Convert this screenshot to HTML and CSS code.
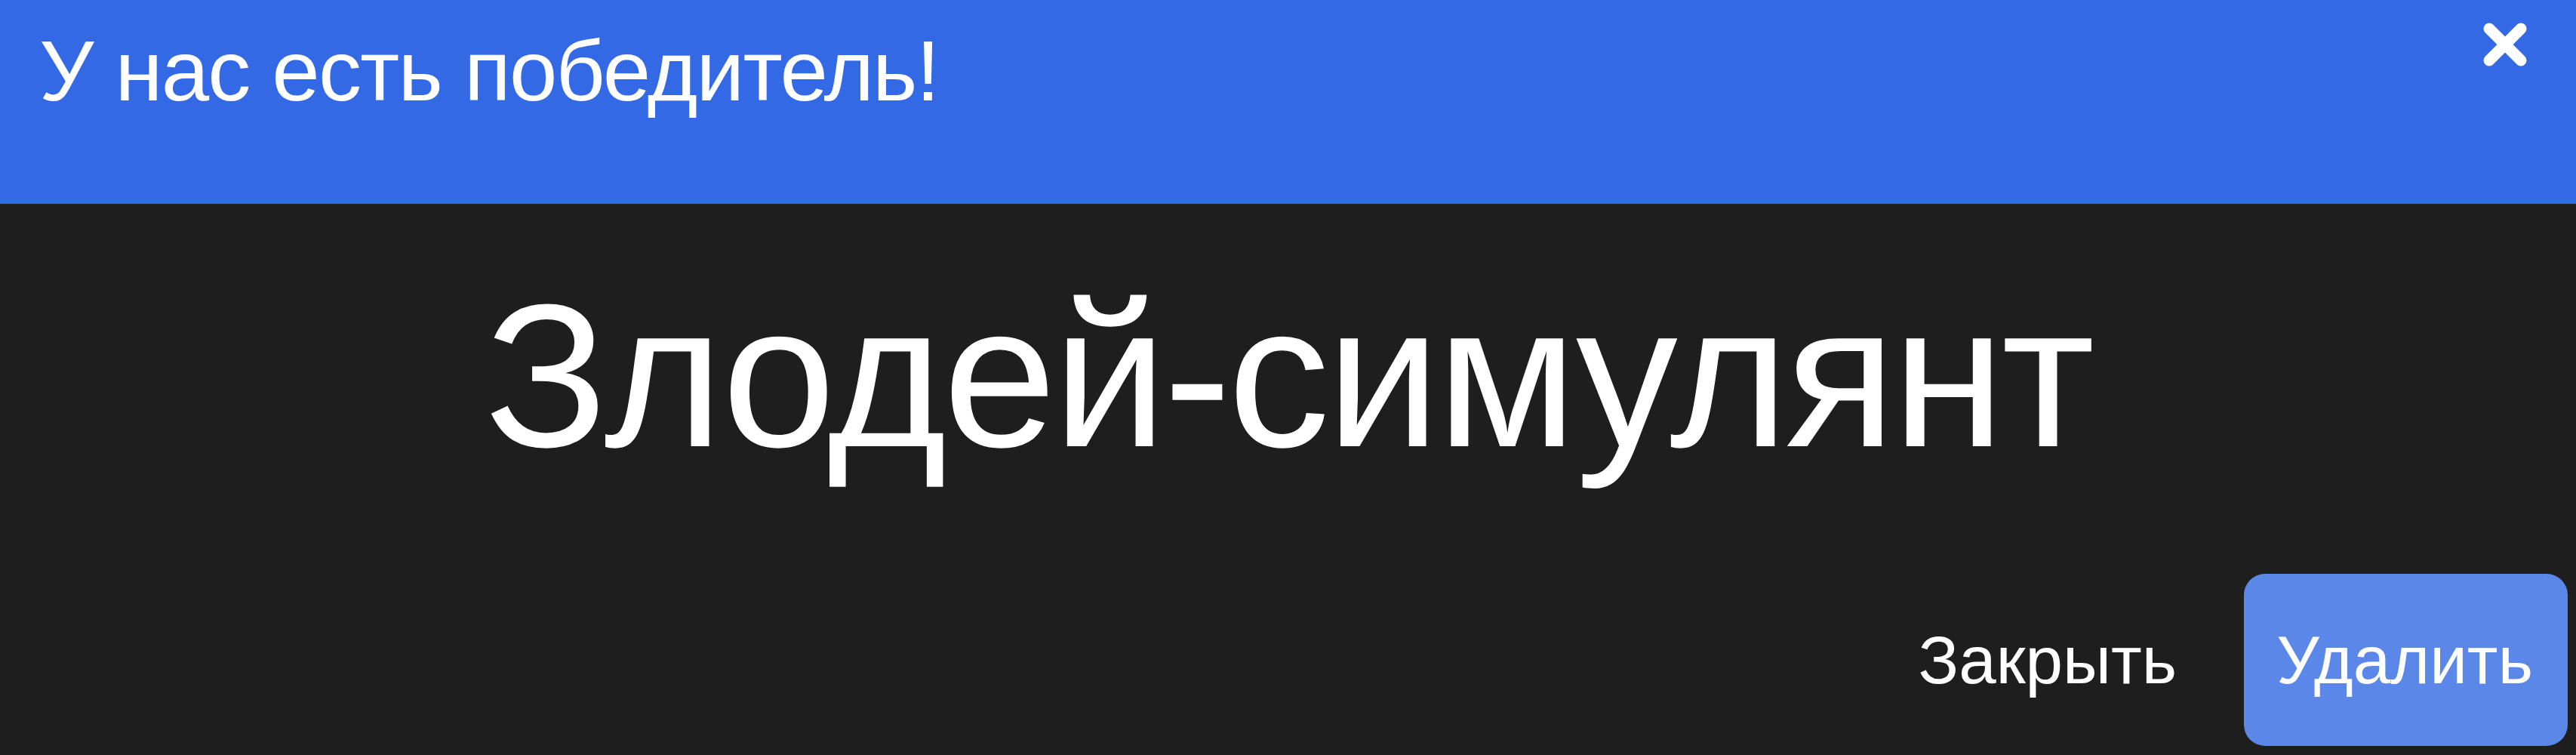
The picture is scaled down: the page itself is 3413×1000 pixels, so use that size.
FILE: index.html
```html
<!DOCTYPE html>
<html lang="ru">
<head>
<meta charset="utf-8">
<title>Победитель</title>
<link rel="stylesheet" href="styles.css">
</head>
<body>
<div class="modal">
  <header class="modal-header">
    <h5 class="modal-title">У нас есть победитель!</h5>
    <button class="btn-close" aria-label="Закрыть">
      <svg viewBox="0 0 62 62" width="62" height="62"><path d="M10 10 L52 52 M52 10 L10 52" stroke="#fff" stroke-width="15" stroke-linecap="round" fill="none"/></svg>
    </button>
  </header>
  <main class="modal-body">
    <h1 class="winner">Злодей-симулянт</h1>
  </main>
  <footer class="modal-footer">
    <button class="btn btn-link">Закрыть</button>
    <button class="btn btn-primary">Удалить</button>
  </footer>
</div>
</body>
</html>
```
FILE: styles.css
```css
html, body {
  margin: 0;
  padding: 0;
  background: #1e1e1e;
  height: 100%;
}
body {
  font-family: "Liberation Sans", Arial, sans-serif;
  color: #fff;
  overflow: hidden;
}
.modal {
  display: flex;
  flex-direction: column;
  height: 1000px;
}
.modal-header {
  height: 270px;
  box-sizing: border-box;
  background: #3469e6;
  display: flex;
  justify-content: space-between;
  align-items: flex-start;
  padding: 28px 63px 0 52px;
}
.modal-title {
  margin: 0;
  font-size: 114px;
  font-weight: 400;
  line-height: 1.15;
  letter-spacing: -1.8px;
}
.btn-close {
  margin-top: 0;
  width: 62px;
  height: 62px;
  padding: 0;
  border: 0;
  background: transparent;
  display: flex;
}
.modal-body {
  padding-top: 73px;
  text-align: center;
}
.winner {
  margin: 0;
  font-size: 270px;
  font-weight: 400;
  line-height: 1.149;
  letter-spacing: -4.5px;
}
.modal-footer {
  margin-top: auto;
  display: flex;
  justify-content: flex-end;
  align-items: center;
  gap: 43px;
  padding: 0 11px 12px 0;
}
.btn {
  font-family: "Liberation Sans", Arial, sans-serif;
  font-size: 89px;
  color: #fff;
  border: 0;
  height: 228px;
  padding: 0 46px 0 43px;
  border-radius: 28px;
  background: transparent;
}
.btn-primary {
  background: #5b87e8;
}
```
